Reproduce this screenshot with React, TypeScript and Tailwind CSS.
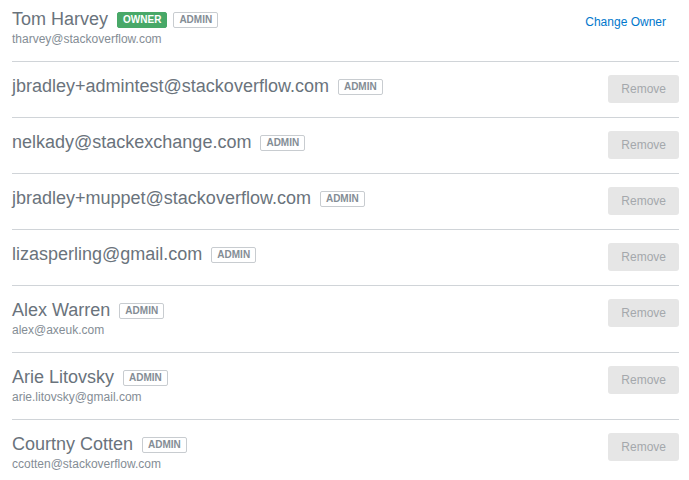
import React from "react";

type Member = {
  name: string;
  email?: string;
  owner?: boolean;
};

const MEMBERS: Member[] = [
  { name: "jbradley+admintest@stackoverflow.com" },
  { name: "nelkady@stackexchange.com" },
  { name: "jbradley+muppet@stackoverflow.com" },
  { name: "lizasperling@gmail.com" },
  { name: "Alex Warren", email: "alex@axeuk.com" },
  { name: "Arie Litovsky", email: "arie.litovsky@gmail.com" },
  { name: "Courtny Cotten", email: "ccotten@stackoverflow.com" },
];

function Badge({ kind }: { kind: "owner" | "admin" }) {
  if (kind === "owner") {
    return (
      <span className="rounded-[2px] border border-[#48a868] bg-[#48a868] px-[5px] py-px text-[10px] font-bold leading-[12px] text-white">
        OWNER
      </span>
    );
  }
  return (
    <span className="rounded-[2px] border border-[#c8ccd0] bg-white px-[5px] py-px text-[10px] font-bold leading-[12px] text-[#848d95]">
      ADMIN
    </span>
  );
}

function NameLine({ name, owner }: { name: string; owner?: boolean }) {
  return (
    <div className="flex h-[23px] items-center">
      <span className="mr-[9px] text-[18px] leading-[23px] text-[#6a737c]">{name}</span>
      <div className="flex items-center gap-[6px]">
        {owner && <Badge kind="owner" />}
        <Badge kind="admin" />
      </div>
    </div>
  );
}

function MemberRow({ m }: { m: Member }) {
  return (
    <div className="flex items-start justify-between border-b border-[#d0d4d8] pb-[14px] pt-[13px]">
      <div>
        <NameLine name={m.name} />
        {m.email && (
          <div className="text-[12px] leading-[16px] text-[#848d95]">{m.email}</div>
        )}
      </div>
      <button
        disabled
        className="h-[28px] rounded-[3px] bg-[#e6e6e6] px-[13px] text-[12px] text-[#a4a8ac]"
      >
        Remove
      </button>
    </div>
  );
}

export default function App() {
  return (
    <div
      className="min-h-screen bg-white pl-3 pr-[10px]"
      style={{ fontFamily: '"Liberation Sans", Arial, sans-serif' }}
    >
      {/* Owner row */}
      <div className="flex items-start justify-between border-b border-[#d0d4d8] pb-[14px] pt-[8px]">
        <div>
          <NameLine name="Tom Harvey" owner />
          <div className="text-[12px] leading-[16px] text-[#848d95]">tharvey@stackoverflow.com</div>
        </div>
        <button className="h-[28px] px-[13px] text-[12px] text-[#0077cc]">Change Owner</button>
      </div>

      {MEMBERS.map((m) => (
        <MemberRow key={m.name} m={m} />
      ))}
    </div>
  );
}
